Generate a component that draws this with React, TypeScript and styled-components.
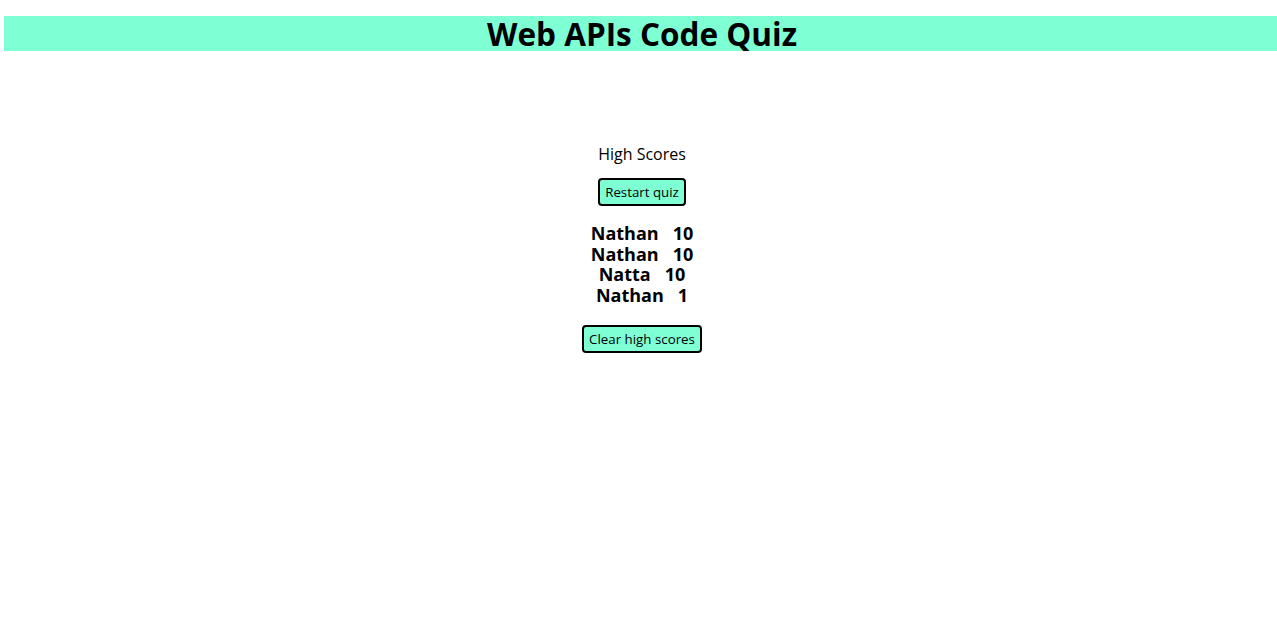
import React from "react";
import styled, { createGlobalStyle } from "styled-components";

const scores = [
  { name: "Nathan", score: 10 },
  { name: "Nathan", score: 10 },
  { name: "Natta", score: 10 },
  { name: "Nathan", score: 1 },
];

const GlobalStyle = createGlobalStyle`
  body {
    margin: 0;
    background: #fff;
    font-family: "Open Sans", "DejaVu Sans", sans-serif;
    color: #000;
  }
`;

const Header = styled.header`
  margin: 16px 0 0 4px;
  padding-left: 3px;
  height: 35px;
  background-color: aquamarine;
  display: flex;
  align-items: center;
  justify-content: center;

  h1 {
    margin: 0;
    font-size: 31.5px;
    line-height: 35px;
    font-weight: 700;
  }
`;

const Main = styled.main`
  display: flex;
  flex-direction: column;
  align-items: center;
  padding: 92px 0 0 7px;
`;

const Title = styled.p`
  margin: 0;
  font-size: 16px;
  line-height: 22px;
`;

const Button = styled.button<{ $top: number }>`
  font-family: "Open Sans", "DejaVu Sans", sans-serif;
  font-size: 13.3px;
  color: #000;
  background-color: aquamarine;
  border: 2px solid #000;
  border-radius: 4px;
  padding: 0 5px;
  height: 28px;
  cursor: pointer;
  margin-top: ${(p) => p.$top}px;
`;

const ScoreList = styled.ol`
  list-style: none;
  margin: 17px 0 0;
  padding: 0;
  text-align: center;

  li {
    font-size: 18px;
    font-weight: 700;
    line-height: 20.7px;
    white-space: pre;
  }
`;

const App = () => {
  return (
    <>
      <GlobalStyle />
      <Header>
        <h1>Web APIs Code Quiz</h1>
      </Header>
      <Main>
        <Title>High Scores</Title>
        <Button $top={13}>Restart quiz</Button>
        <ScoreList>
          {scores.map((s, i) => (
            <li key={i}>
              {s.name}   {s.score}
            </li>
          ))}
        </ScoreList>
        <Button $top={19}>Clear high scores</Button>
      </Main>
    </>
  );
};

export default App;
